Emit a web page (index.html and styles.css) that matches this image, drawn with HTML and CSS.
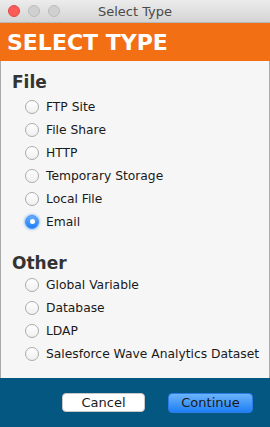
FILE: index.html
```html
<!DOCTYPE html>
<html lang="en">
  <head>
    <meta charset="UTF-8" />
    <meta name="viewport" content="width=device-width, initial-scale=1.0" />
    <title>Select Type</title>
    <link rel="stylesheet" href="styles.css">
  </head>
  <body>
    <div class="window">
      <div class="titlebar">
        <div class="lights">
          <span class="light close"></span>
          <span class="light"></span>
          <span class="light"></span>
        </div>
        <div class="title">Select Type</div>
      </div>
      <div class="banner">SELECT TYPE</div>
      <div class="content">
        <h3 class="group">File</h3>
        <ul class="options">
          <li><span class="radio"></span>FTP Site</li>
          <li><span class="radio"></span>File Share</li>
          <li><span class="radio"></span>HTTP</li>
          <li><span class="radio"></span>Temporary Storage</li>
          <li><span class="radio"></span>Local File</li>
          <li><span class="radio checked"></span>Email</li>
        </ul>
        <h3 class="group other">Other</h3>
        <ul class="options other-list">
          <li><span class="radio"></span>Global Variable</li>
          <li><span class="radio"></span>Database</li>
          <li><span class="radio"></span>LDAP</li>
          <li><span class="radio"></span>Salesforce Wave Analytics Dataset</li>
        </ul>
      </div>
      <div class="footer">
        <button class="btn cancel">Cancel</button>
        <button class="btn primary">Continue</button>
      </div>
    </div>
  </body>
</html>
```

FILE: styles.css
```css
body {
  margin: 0;
  font-family: "DejaVu Sans", sans-serif;
  font-size: 12px;
  color: #1a1a1a;
}

.window {
  width: 270px;
  height: 427px;
  display: flex;
  flex-direction: column;
}

.titlebar {
  height: 22px;
  background: linear-gradient(#ececec, #d4d4d4);
  border-bottom: 1px solid #b8b8b8;
  display: flex;
  align-items: center;
  position: relative;
}

.lights {
  display: flex;
  gap: 8px;
  padding-left: 8px;
}

.light {
  width: 12px;
  height: 12px;
  border-radius: 50%;
  background: #d0d0d0;
  border: 1px solid #bdbdbd;
  box-sizing: border-box;
}

.light.close {
  background: #fc5b57;
  border-color: #de4a45;
}

.title {
  position: absolute;
  left: 0;
  right: 0;
  text-align: center;
  font-size: 13px;
  color: #4a4a4a;
}

.banner {
  height: 38px;
  background: #f26f13;
  color: #fff;
  font-weight: bold;
  font-size: 22px;
  display: flex;
  align-items: center;
  padding-left: 7px;
}

.content {
  flex: 1;
  background: #f6f6f6;
  border-left: 1px solid #a9a9a9;
  border-right: 1px solid #a9a9a9;
  padding: 11px 0 0 11px;
}

.group {
  margin: 0;
  font-size: 17px;
  line-height: 20px;
  color: #333;
}

.group.other {
  margin-top: 20px;
}

.options {
  list-style: none;
  margin: 3px 0 0;
  padding: 0 0 0 13px;
}

.options.other-list {
  margin-top: 0;
}

.options li {
  height: 23px;
  display: flex;
  align-items: center;
  gap: 7px;
  font-size: 12.3px;
}

.radio {
  width: 14px;
  height: 14px;
  border-radius: 50%;
  box-sizing: border-box;
  border: 1px solid #ababab;
  background: linear-gradient(#ffffff, #f0f0f0);
  display: flex;
  align-items: center;
  justify-content: center;
}

.radio.checked {
  border-color: #3b8ef0;
  background: linear-gradient(#66adfc, #1e7ff5);
  box-shadow: 0 0 2px 1px rgba(80, 150, 250, 0.5);
}

.radio.checked::after {
  content: "";
  width: 5px;
  height: 5px;
  border-radius: 50%;
  background: #fff;
}

.footer {
  height: 49px;
  background: #045781;
  display: flex;
  align-items: center;
  justify-content: flex-end;
  gap: 23px;
  padding-right: 17px;
}

.btn {
  font-family: "DejaVu Sans", sans-serif;
  font-size: 13px;
  height: 19px;
  padding: 0;
  border-radius: 4px;
  color: #1a1a1a;
}

.btn.cancel {
  width: 83px;
  background: #fff;
  border: 1px solid #c8c8c8;
}

.btn.primary {
  width: 85px;
  height: 20px;
  background: linear-gradient(#6cb3fa, #1d7ff6);
  border: 1px solid #2c7be6;
}
```
